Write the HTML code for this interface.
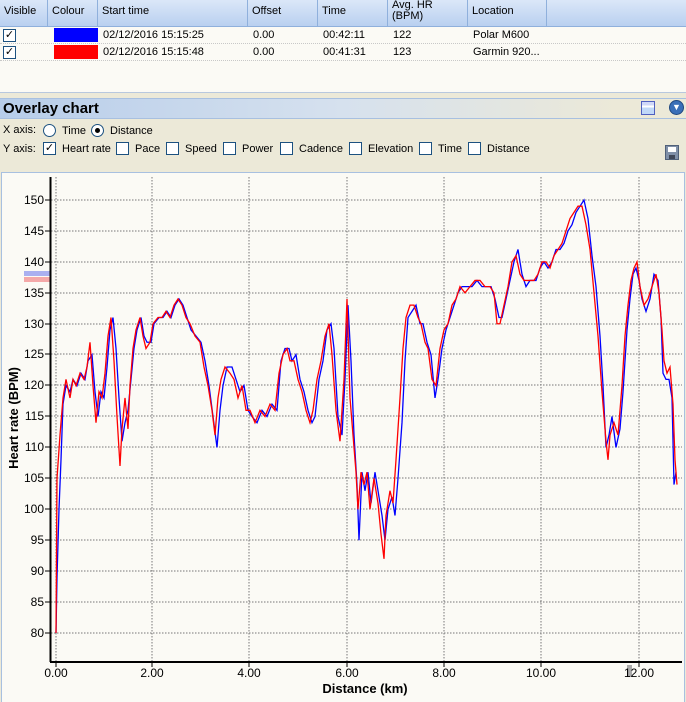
<!DOCTYPE html>
<html><head><meta charset="utf-8"><style>
*{margin:0;padding:0;box-sizing:border-box}
body{width:686px;height:702px;overflow:hidden;background:#ece9d8;font-family:"Liberation Sans",Arial,sans-serif;font-size:11px;color:#000;position:relative}
.abs{position:absolute}
#hdr{left:0;top:0;width:686px;height:27px;background:linear-gradient(#dbe7f8,#b9d0f0);border-bottom:1px solid #8fb0dc}
.hc{position:absolute;top:0;height:26px;border-right:1px solid #8fb0dc;padding:3px 0 0 4px;line-height:11px}
#tbl{left:0;top:27px;width:686px;height:66px;background:#fbfaf5;border-bottom:1px solid #b8c8de}
.row{position:absolute;left:0;width:686px;height:17px;border-bottom:1px dotted #c8c8c8}
.cell{position:absolute;top:2px}
.cb{position:absolute;width:13px;height:13px;border:1px solid #1c5180;background:#fff;font-size:11px;line-height:11px;text-align:center}
#title{left:0;top:98px;width:686px;height:21px;border-top:1px solid #a8c0e0;border-bottom:1px solid #a8c0e0;background:linear-gradient(90deg,#b7cdea 0%,#d6e1ee 50%,#ece9d8 90%)}
.rb{position:absolute;width:13px;height:13px;border:1px solid #1c5180;border-radius:50%;background:#fff}
#chart{left:1px;top:172px;width:684px;height:530px;background:#fbfaf5;border:1px solid #a8c0e0;border-bottom:none}
</style></head><body>
<div id="hdr" class="abs">
<div class="hc" style="left:0;width:48px;padding-top:6px">Visible</div>
<div class="hc" style="left:48px;width:50px;padding-top:6px">Colour</div>
<div class="hc" style="left:98px;width:150px;padding-top:6px">Start time</div>
<div class="hc" style="left:248px;width:70px;padding-top:6px">Offset</div>
<div class="hc" style="left:318px;width:70px;padding-top:6px">Time</div>
<div class="hc" style="left:388px;width:80px;padding-top:0;line-height:11px;overflow:hidden">Avg. HR<br>(BPM)</div>
<div class="hc" style="left:468px;width:79px;padding-top:6px">Location</div>
</div>
<div id="tbl" class="abs">
<div class="row" style="top:0">
<div class="cb" style="left:3px;top:2px">✓</div>
<div class="abs" style="left:54px;top:1px;width:44px;height:14px;background:#0000ff"></div>
<div class="cell" style="left:103px">02/12/2016 15:15:25</div>
<div class="cell" style="left:253px">0.00</div>
<div class="cell" style="left:323px">00:42:11</div>
<div class="cell" style="left:393px">122</div>
<div class="cell" style="left:473px">Polar M600</div>
</div>
<div class="row" style="top:17px">
<div class="cb" style="left:3px;top:2px">✓</div>
<div class="abs" style="left:54px;top:1px;width:44px;height:14px;background:#ff0000"></div>
<div class="cell" style="left:103px">02/12/2016 15:15:48</div>
<div class="cell" style="left:253px">0.00</div>
<div class="cell" style="left:323px">00:41:31</div>
<div class="cell" style="left:393px">123</div>
<div class="cell" style="left:473px">Garmin 920...</div>
</div>
</div>
<div id="title" class="abs"><div class="abs" style="left:3px;top:1px;font-size:15px;font-weight:bold">Overlay chart</div>
<div class="abs" style="left:641px;top:2px;width:14px;height:14px;border:1px solid #5060c0;background:linear-gradient(#d0d8f8 0 30%,#fff 30% 45%,#c0d8f8 45%)"></div>
<div class="abs" style="left:669px;top:1px;width:15px;height:15px;border-radius:50%;background:#3a6fb8;border:1px solid #204880;color:#fff;font-size:9px;line-height:13px;text-align:center">▼</div>
</div>
<div class="abs" style="left:3px;top:124px">X axis:</div>
<div class="rb" style="left:43px;top:124px"></div><div class="abs" style="left:62px;top:125px">Time</div>
<div class="rb" style="left:91px;top:124px"><div style="position:absolute;left:3px;top:3px;width:5px;height:5px;border-radius:50%;background:#000"></div></div><div class="abs" style="left:110px;top:125px">Distance</div>
<div class="abs" style="left:3px;top:143px">Y axis:</div>
<div class="cb" style="left:43px;top:142px">✓</div><div class="abs" style="left:62px;top:143px">Heart rate</div>
<div class="cb" style="left:116px;top:142px"></div><div class="abs" style="left:135px;top:143px">Pace</div>
<div class="cb" style="left:166px;top:142px"></div><div class="abs" style="left:185px;top:143px">Speed</div>
<div class="cb" style="left:223px;top:142px"></div><div class="abs" style="left:242px;top:143px">Power</div>
<div class="cb" style="left:280px;top:142px"></div><div class="abs" style="left:299px;top:143px">Cadence</div>
<div class="cb" style="left:349px;top:142px"></div><div class="abs" style="left:368px;top:143px">Elevation</div>
<div class="cb" style="left:419px;top:142px"></div><div class="abs" style="left:438px;top:143px">Time</div>
<div class="cb" style="left:468px;top:142px"></div><div class="abs" style="left:487px;top:143px">Distance</div>
<div class="abs" style="left:665px;top:145px;width:14px;height:15px;background:#8090a8;border:1px solid #506078"><div style="position:absolute;left:2px;top:1px;width:8px;height:5px;background:#fff"></div><div style="position:absolute;left:3px;top:9px;width:6px;height:4px;background:#404858"></div></div>
<div id="chart" class="abs"></div>
<svg class="abs" style="left:0;top:0" width="686" height="702" xmlns="http://www.w3.org/2000/svg" font-family="Liberation Sans,Arial,sans-serif">
<g stroke="#777" stroke-dasharray="1.5,1.5" stroke-width="1">
<line x1="51" x2="682" y1="200" y2="200"/><line x1="51" x2="682" y1="231" y2="231"/><line x1="51" x2="682" y1="262" y2="262"/><line x1="51" x2="682" y1="293" y2="293"/><line x1="51" x2="682" y1="324" y2="324"/><line x1="51" x2="682" y1="354" y2="354"/><line x1="51" x2="682" y1="385" y2="385"/><line x1="51" x2="682" y1="416" y2="416"/><line x1="51" x2="682" y1="447" y2="447"/><line x1="51" x2="682" y1="478" y2="478"/><line x1="51" x2="682" y1="509" y2="509"/><line x1="51" x2="682" y1="540" y2="540"/><line x1="51" x2="682" y1="571" y2="571"/><line x1="51" x2="682" y1="602" y2="602"/><line x1="51" x2="682" y1="633" y2="633"/>
<line x1="56" x2="56" y1="177" y2="662"/><line x1="152" x2="152" y1="177" y2="662"/><line x1="249" x2="249" y1="177" y2="662"/><line x1="347" x2="347" y1="177" y2="662"/><line x1="444" x2="444" y1="177" y2="662"/><line x1="541" x2="541" y1="177" y2="662"/><line x1="639" x2="639" y1="177" y2="662"/>
</g>
<rect x="24" y="271" width="26" height="5" fill="#aab0f0"/><rect x="24" y="277" width="26" height="5" fill="#f4a8a8"/>
<g transform="matrix(1 0 0 -6.186 0 1127.9)" fill="none" stroke-width="1.3" stroke-linejoin="miter">
<polyline vector-effect="non-scaling-stroke" stroke="#0000ff" points="56,80 57,89 59,100 61,108 63,117 66,120 70,119 73,121 77,120 81,122 85,121 88,124 92,125 95,119 98,115 101,119 104,118 107,123 110,129 113,131 116,126 119,118 122,111 125,114 128,116 131,121 134,126 137,129 141,131 144,128 147,127 151,127 154,130 159,131 163,131 167,132 171,131 175,133 179,134 183,133 187,131 191,129 196,128 201,127 205,124 209,120 213,115 217,110 220,116 223,120 227,123 232,123 236,121 240,119 244,120 248,116 252,115 257,114 262,116 267,115 272,117 277,116 281,124 285,126 289,126 292,124 296,125 300,121 304,119 308,116 312,114 315,115 319,121 323,124 327,129 331,130 334,126 338,115 342,112 345,121 348,133 351,124 354,112 357,104 359,95 362,106 365,103 368,106 371,101 375,106 379,102 382,99 385,95 388,100 392,102 395,99 398,105 402,114 405,124 408,131 412,132 416,133 420,130 423,130 427,127 431,125 435,118 438,121 442,126 446,129 450,131 454,133 458,135 462,136 467,136 472,136 477,137 482,136 487,136 491,136 495,134 499,131 502,131 506,134 510,137 514,140 518,142 522,138 526,136 530,137 536,137 540,139 544,140 548,139 552,140 556,142 560,142 564,143 568,145 572,146 576,148 580,149 584,150 588,147 592,141 596,136 600,128 603,120 606,110 609,112 612,115 616,110 620,113 623,119 627,129 630,134 633,138 636,139 639,137 642,134 646,132 650,134 654,138 658,137 661,131 663,122 666,121 669,121 672,118 674,104 676,106"/>
<polyline vector-effect="non-scaling-stroke" stroke="#ff0000" points="56,80 57,105 60,112 63,118 66,121 70,118 73,121 76,120 80,122 84,121 87,123 90,127 93,120 96,114 99,119 102,118 105,122 108,128 111,131 114,124 117,115 120,107 122,113 125,118 128,113 130,120 133,126 136,129 140,131 143,128 146,126 150,127 153,130 158,131 162,131 166,132 170,131 174,133 178,134 182,133 186,131 190,130 195,128 200,127 204,123 208,120 212,116 215,112 218,118 221,121 225,123 230,122 234,121 238,118 242,120 246,116 250,116 255,114 260,116 265,115 270,117 275,116 279,122 283,125 287,126 290,124 294,124 298,121 302,119 306,116 310,114 313,116 317,121 321,124 325,128 329,130 332,125 336,116 340,111 344,121 347,134 350,118 353,112 356,106 358,100 361,106 364,104 367,106 370,100 374,105 378,101 381,96 384,92 386,99 390,103 393,101 396,108 400,118 403,126 406,131 410,133 414,133 418,131 421,130 425,127 428,126 432,121 436,120 440,126 444,129 448,130 452,133 456,134 460,136 465,135 470,136 475,137 480,137 485,136 490,136 494,135 497,130 500,130 504,133 508,136 512,140 516,141 520,138 524,137 528,137 534,137 538,138 542,140 546,140 550,139 554,141 558,142 562,143 566,145 570,147 574,148 578,149 582,149 586,146 590,142 594,135 598,128 602,119 606,111 608,108 610,112 614,114 618,112 622,120 625,128 628,133 631,137 634,139 637,140 640,136 644,133 648,134 652,136 656,138 659,135 662,129 664,124 667,122 670,123 673,117 675,108 677,104"/>
</g>
<line x1="50.5" y1="177" x2="50.5" y2="662" stroke="#000" stroke-width="2"/>
<line x1="50" y1="662" x2="682" y2="662" stroke="#000" stroke-width="2"/>
<g stroke="#000"><line x1="45" x2="50" y1="200" y2="200"/><line x1="45" x2="50" y1="231" y2="231"/><line x1="45" x2="50" y1="262" y2="262"/><line x1="45" x2="50" y1="293" y2="293"/><line x1="45" x2="50" y1="324" y2="324"/><line x1="45" x2="50" y1="354" y2="354"/><line x1="45" x2="50" y1="385" y2="385"/><line x1="45" x2="50" y1="416" y2="416"/><line x1="45" x2="50" y1="447" y2="447"/><line x1="45" x2="50" y1="478" y2="478"/><line x1="45" x2="50" y1="509" y2="509"/><line x1="45" x2="50" y1="540" y2="540"/><line x1="45" x2="50" y1="571" y2="571"/><line x1="45" x2="50" y1="602" y2="602"/><line x1="45" x2="50" y1="633" y2="633"/>
<line x1="56" x2="56" y1="662" y2="667"/><line x1="152" x2="152" y1="662" y2="667"/><line x1="249" x2="249" y1="662" y2="667"/><line x1="347" x2="347" y1="662" y2="667"/><line x1="444" x2="444" y1="662" y2="667"/><line x1="541" x2="541" y1="662" y2="667"/><line x1="639" x2="639" y1="662" y2="667"/></g>
<g font-size="12" text-anchor="end" fill="#000">
<text x="44" y="204">150</text><text x="44" y="235">145</text><text x="44" y="266">140</text><text x="44" y="297">135</text><text x="44" y="328">130</text><text x="44" y="358">125</text><text x="44" y="389">120</text><text x="44" y="420">115</text><text x="44" y="451">110</text><text x="44" y="482">105</text><text x="44" y="513">100</text><text x="44" y="544">95</text><text x="44" y="575">90</text><text x="44" y="606">85</text><text x="44" y="637">80</text></g>
<rect x="627" y="665" width="5" height="12" fill="#aaa"/>
<g font-size="12" text-anchor="middle"><text x="56" y="677">0.00</text><text x="152" y="677">2.00</text><text x="249" y="677">4.00</text><text x="347" y="677">6.00</text><text x="444" y="677">8.00</text><text x="541" y="677">10.00</text><text x="639" y="677">12.00</text></g>
<text x="365" y="693" font-size="13" font-weight="bold" text-anchor="middle">Distance (km)</text>
<text transform="translate(18 418) rotate(-90)" font-size="13" font-weight="bold" text-anchor="middle">Heart rate (BPM)</text>
</svg>
</body></html>
